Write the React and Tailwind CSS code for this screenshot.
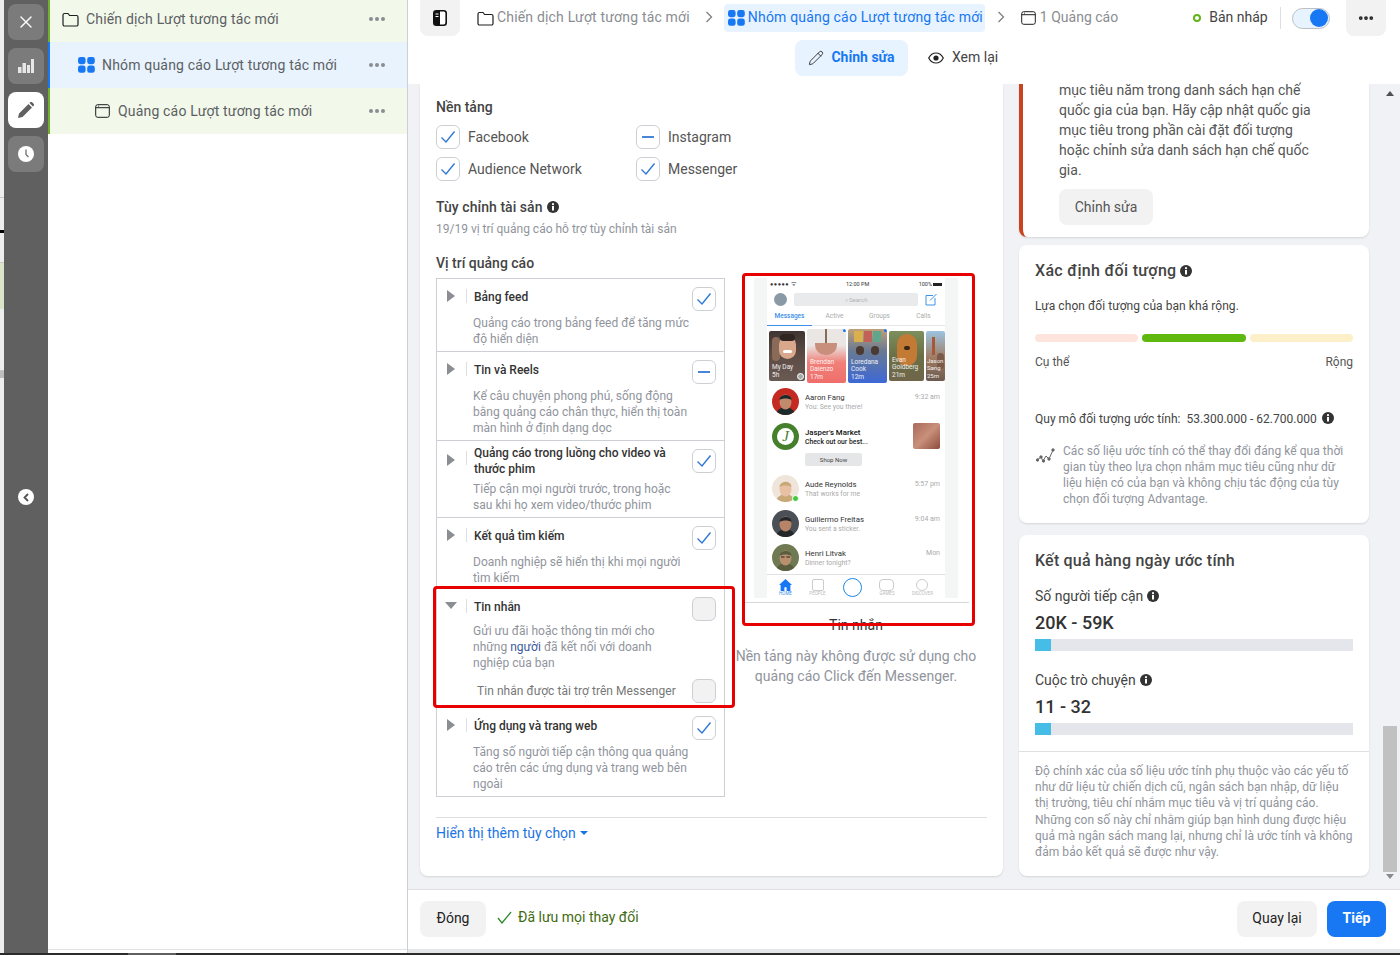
import React from "react";
import { X, Pencil, MoreHorizontal } from "lucide-react";

const Info = ({ s = 12, c = "#333" }) => (
  <svg width={s} height={s} viewBox="0 0 12 12" className="inline-block shrink-0">
    <circle cx="6" cy="6" r="6" fill={c} />
    <rect x="5" y="5" width="2" height="4.5" fill="#fff" />
    <circle cx="6" cy="3.2" r="1.1" fill="#fff" />
  </svg>
);
const Folder = ({ c = "#1c1e21" }) => (
  <svg width="17" height="15" viewBox="0 0 17 15" fill="none" stroke={c} strokeWidth="1.2" className="shrink-0">
    <path d="M1 3a1.5 1.5 0 0 1 1.5-1.5H6l1.6 2H14.5A1.5 1.500 0 0 1 16 5v7.500a1.500 1.500 0 0 1-1.500 1.500h-12A1.500 1.500 0 0 1 1 12.500z" />
  </svg>
);
const Grid4 = () => (
  <svg width="17" height="16" viewBox="0 0 17 16" fill="#1877f2" className="shrink-0">
    <rect x="0" y="0" width="7.6" height="7.2" rx="2.4" />
    <rect x="9.2" y="0" width="7.6" height="7.2" rx="2.4" />
    <rect x="0" y="8.6" width="7.6" height="7.2" rx="2.4" />
    <rect x="9.2" y="8.6" width="7.6" height="7.2" rx="2.4" />
  </svg>
);
const AdIcon = () => (
  <svg width="15" height="14" viewBox="0 0 15 14" fill="none" stroke="#1c1e21" strokeWidth="1" className="shrink-0">
    <rect x="0.7" y="0.7" width="13.6" height="12.6" rx="2" />
    <path d="M0.7 3.7h13.6" />
    <path d="M3 2.2h.8" />
  </svg>
);
const Box = ({ kind = "check", gray }) => (
  <div className={`w-6 h-6 rounded-md border border-[#ccd0d5] flex items-center justify-center shrink-0 ${gray ? "bg-[#f2f2f2]" : "bg-white"}`}>
    {kind === "check" && (
      <svg width="16" height="14" viewBox="0 0 16 14" fill="none" stroke="#2f78d8" strokeWidth="1.4">
        <path d="M1.5 7.5 6 12 14.5 1.5" />
      </svg>
    )}
    {kind === "dash" && <div className="w-3 h-[2px] bg-[#4a86d8]" />}
  </div>
);
const Dots = () => (
  <div className="flex gap-[2px] ml-auto mr-[22px]">
    <span className="w-[4px] h-[4px] rounded-full bg-[#8a8d91]" />
    <span className="w-[4px] h-[4px] rounded-full bg-[#8a8d91]" />
    <span className="w-[4px] h-[4px] rounded-full bg-[#8a8d91]" />
  </div>
);
const Chevron = () => (
  <svg width="8" height="12" viewBox="0 0 8 12" fill="none" stroke="#7c7f84" strokeWidth="1.3" className="shrink-0 -mt-[2px]">
    <path d="M1.5 1 6.5 6 1.5 11" />
  </svg>
);

const Row = ({ h, title, desc, kind = "check", open, last, tp = "pt-[10px]", dg = "mt-[10px]", tri = "pt-[11px]" }) => (
  <div className={`flex pl-[10px] pr-[8px] ${last ? "" : "border-b border-[#ccd0d5]"} ${h}`}>
    <div className={`w-[19px] shrink-0 flex ${tri}`}>
      {open ? (
        <svg width="12" height="7" viewBox="0 0 12 7" fill="#8a8d91" className="mt-[2px] -ml-[2px]"><path d="M0 0h12L6 7z" /></svg>
      ) : (
        <svg width="8" height="12" viewBox="0 0 8 12" fill="#8a8d91"><path d="M0 0l8 6-8 6z" /></svg>
      )}
    </div>
    <div className="w-[1px] h-[14px] bg-[#dddfe2] mt-[10px] shrink-0" />
    <div className="ml-[7px] w-[219px] shrink-0">
      <div className={`text-[12px] leading-[16px] font-medium text-[#333] w-[205px] ${tp}`}>{title}</div>
      <div className={`text-[12px] leading-[16px] text-[#90949c] tracking-[0.03px] -ml-[1px] w-[225px] ${dg}`}>{desc}</div>
    </div>
    <div className="pt-[8px] ml-[-1px]"><Box kind={kind} gray={kind === "none"} /></div>
  </div>
);

const Tile = ({ w, h, bg, lines, children, big, tight }) => (
  <div className="relative shrink-0 rounded-[2px] overflow-hidden" style={{ width: w, height: h, background: bg }}>
    {children}
    <div className={`absolute bottom-[2px] text-white/90 leading-[7.5px] ${tight ? "left-[1px] text-[6px]" : "left-[3px] text-[6.5px]"}`}>
      {lines.map((l) => <div key={l}>{l}</div>)}
    </div>
    {big && <span className="absolute top-0 right-0 w-[3px] h-[3px] rounded-full bg-[#1877f2]" />}
  </div>
);

const Face = ({ id, skin, hair, bg, dot, glasses }) => (
  <div className="relative w-[27px] h-[27px] shrink-0">
    <svg viewBox="0 0 27 27" width="27" height="27">
      <clipPath id={id}><circle cx="13.5" cy="13.5" r="13.5" /></clipPath>
      <g clipPath={`url(#${id})`}>
        <rect width="27" height="27" fill={bg} />
        <ellipse cx="13.5" cy="28" rx="10" ry="9" fill={hair} />
        <ellipse cx="13.5" cy="14" rx="6" ry="7.5" fill={skin} />
        <path d="M7.5 12c0-6 12-7 12 0-3-2-9-2-12 0z" fill={hair} />
        {glasses && <path d="M9 13h3.500M14.500 13H18" stroke="#222" strokeWidth="1.200" />}
      </g>
    </svg>
    {dot && <span className="absolute right-0 bottom-0 w-[7px] h-[7px] rounded-full bg-[#42c83f] border border-white" />}
  </div>
);

const Msg = ({ name, sub, time, img, mt, bold }) => (
  <div className={`flex items-start pl-[5px] pr-[5px] ${mt}`}>
    {img}
    <div className="ml-[6px] pt-[5px] grow min-w-0 whitespace-nowrap">
      <div className={`text-[7.8px] leading-[9px] ${bold ? "text-[#111] font-medium" : "text-[#333]"}`}>{name}</div>
      <div className={`text-[6.8px] leading-[11px] ${bold ? "text-[#222] font-medium" : "text-[#aaa]"}`}>{sub}</div>
    </div>
    {time && <div className="text-[7px] leading-[9px] pt-[5px] text-[#aaa]">{time}</div>}
  </div>
);

function Phone() {
  return (
    <div className="w-[225px] border-b border-[#d6d7d9] pb-[4px] mx-auto">
      <div className="w-[204px] h-[320px] mx-auto bg-[#f4f5f5] px-[13px]">
        <div className="w-[178px] h-[320px] bg-white overflow-hidden flex flex-col">
          <div className="flex justify-between items-center h-[10px] mt-[1px] px-[3px] text-[5.5px] text-[#333]">
            <span className="tracking-[0.5px]">●●●●● ᯤ</span>
            <span>12:00 PM</span>
            <span className="flex items-center gap-[1px]">100% <span className="w-[9px] h-[3px] bg-[#222] inline-block" /></span>
          </div>
          <div className="flex items-center h-[14px] mt-[3px] px-[7px] gap-[7px]">
            <div className="w-[13px] h-[13px] rounded-full bg-[#8a9aa5] shrink-0" />
            <div className="grow h-[13px] rounded-[2px] bg-[#e9eaeb] text-[6px] text-[#b4b6b8] flex items-center justify-center">⌕ Search</div>
            <svg width="13" height="13" viewBox="0 0 13 13" fill="none" stroke="#3a95e8" strokeWidth="1" className="shrink-0">
              <path d="M1 2.500h7M1 2.500v9.500h9V5M5 7.500 11.500 1" />
            </svg>
          </div>
          <div className="flex h-[18px] border-b border-[#e5e6e7] mt-[2px] text-[6.5px] text-[#aaa] items-center relative">
            <span className="w-[45px] text-center text-[#3b8fe6] font-medium h-[18px] leading-[17px] border-b border-[#3b8fe6]">Messages</span>
            <span className="w-[45px] text-center">Active</span>
            <span className="w-[45px] text-center">Groups</span>
            <span className="w-[43px] text-center">Calls</span>
          </div>
          <div className="flex gap-[2px] pl-[2px] items-center h-[58px] mt-[1px]">
            <Tile w={36} h={50} bg="linear-gradient(180deg,#3f3532,#5c4a42 45%,#6a5a55)" lines={["My Day", "5h"]}>
              <div className="absolute left-[3px] top-[6px] w-[8px] h-[24px] rounded-full bg-[#8a6a58]" />
              <div className="absolute left-[10px] top-[5px] w-[17px] h-[23px] rounded-full bg-[#d8a78c]" />
              <div className="absolute left-[11px] top-[3px] w-[15px] h-[7px] rounded-full bg-[#2f2521]" />
              <div className="absolute left-[14px] top-[19px] w-[9px] h-[3px] rounded-full bg-white" />
              <div className="absolute right-[1px] bottom-[1px] w-[7px] h-[7px] rounded-full bg-[#aaa] border border-white" />
            </Tile>
            <Tile w={39} h={54} bg="linear-gradient(180deg,#e9e6e4,#e9e6e4 30%,#f08078 62%,#ef6e6c)" lines={["Brendan", "Daienzo", "17m"]} big>
              <div className="absolute left-[8px] top-[14px] w-[22px] h-[12px] rounded-b-[10px] bg-[#c98f7d]" />
              <div className="absolute left-[18px] top-0 w-[2px] h-[14px] bg-[#8a6a5a]" />
            </Tile>
            <Tile w={39} h={54} bg="linear-gradient(180deg,#c0a078,#6a7a92 40%,#3d68d6)" lines={["Loredana", "Cook", "12m"]} big>
              <div className="absolute left-[6px] top-[2px] w-[9px] h-[11px] bg-[#d9b04c]" />
              <div className="absolute left-[16px] top-[2px] w-[8px] h-[11px] bg-[#c0625a]" />
              <div className="absolute left-[25px] top-[2px] w-[8px] h-[11px] bg-[#5fa68c]" />
              <div className="absolute left-[8px] top-[17px] w-[8px] h-[9px] rounded-full bg-[#4a3a32]" />
              <div className="absolute left-[23px] top-[17px] w-[8px] h-[9px] rounded-full bg-[#4a3a32]" />
            </Tile>
            <Tile w={35} h={50} bg="linear-gradient(180deg,#7d8f5c,#6a6f45 50%,#70654a)" lines={["Evan", "Goldberg", "21m"]}>
              <div className="absolute left-[8px] top-[3px] w-[20px] h-[32px] rounded-full bg-[#c27a35]" />
              <div className="absolute left-[15px] top-[15px] w-[6px] h-[4px] rounded-full bg-[#3a2415]" />
            </Tile>
            <Tile tight w={19} h={50} bg="linear-gradient(180deg,#9cc4e0,#a07a60 55%,#6b5a50)" lines={["Jason", "Sang", "25m"]}>
              <div className="absolute left-[6px] top-[6px] w-[3px] h-[18px] bg-[#a8583a]" />
              <div className="absolute left-[11px] top-[22px] w-[7px] h-[16px] rounded-full bg-[#7a5a48]" />
            </Tile>
          </div>
          <div className="flex flex-col">
            <Msg mt="mt-[3px]" name="Aaron Fang" sub="You: See you there!" time="9:32 am" img={<Face id="fa" skin="#c08a6c" hair="#1c2a2a" bg="#c52a22" />} />
            <Msg mt="mt-[8px]" name="Jasper's Market" sub="Check out our best..." bold img={
              <div className="w-[27px] h-[27px] rounded-full bg-[#46802c] flex items-center justify-center shrink-0">
                <div className="w-[17px] h-[17px] rounded-full bg-white flex items-center justify-center text-[#46802c] text-[15px] italic font-['Liberation_Serif',serif]">J</div>
              </div>
            } time={<div className="w-[27px] h-[26px] -mt-[5px] rounded-[2px] bg-[linear-gradient(135deg,#a9695a,#c8907a_50%,#8c4a3c)]" />} />
            <div className="ml-[38px] mt-[3px] w-[57px] h-[13px] bg-[#e5e6e7] rounded-[2px] text-[6px] leading-[13px] text-center text-[#444]">Shop Now</div>
            <Msg mt="mt-[9px]" name="Aude Reynolds" sub="That works for me" time="5:57 pm" img={<Face id="fb" skin="#e8c0a4" hair="#c9a878" bg="#efe5da" dot />} />
            <Msg mt="mt-[8px]" name="Guillermo Freitas" sub="You sent a sticker." time="9:04 am" img={<Face id="fc" skin="#b88468" hair="#24282b" bg="#4a5056" />} />
            <Msg mt="mt-[7px]" name="Henri Litvak" sub="Dinner tonight?" time="Mon" img={<Face id="fd" skin="#b8906e" hair="#5a5d3e" bg="#6f7a52" glasses />} />
          </div>
          <div className="mt-[3px] border-t border-[#dfe0e1] flex justify-between items-start pl-[12px] pr-[12px] h-[24px] relative text-[4.5px] text-[#bbb]">
            <div className="flex flex-col items-center text-[#3b8fe6] pt-[4px]">
              <svg width="13" height="12" viewBox="0 0 12 11" fill="#1877f2"><path d="M6 0 12 5.500H10.500V11H7V7.500H5V11H1.500V5.500H0z" /></svg>
              <span>HOME</span>
            </div>
            <div className="flex flex-col items-center pt-[4px]">
              <div className="w-[12px] h-[12px] rounded-[2px] border border-[#ccc]" />
              <span>PEOPLE</span>
            </div>
            <div className="w-[19px] h-[19px] rounded-full border-[1.5px] border-[#1d87e4] mt-[3px]" />
            <div className="flex flex-col items-center pt-[4px]">
              <div className="w-[15px] h-[12px] rounded-[4px] border border-[#ccc]" />
              <span>GAMES</span>
            </div>
            <div className="flex flex-col items-center pt-[4px]">
              <div className="w-[12px] h-[12px] rounded-full border border-[#ccc]" />
              <span>DISCOVER</span>
            </div>
          </div>
        </div>
      </div>
    </div>
  );
}

export default function App() {
  return (
    <div className="flex flex-col w-[1400px] h-[955px] overflow-hidden bg-white font-['Roboto',sans-serif] text-[14px] text-[#444]">
      <div className="flex h-[953px] shrink-0 overflow-hidden">
        {/* underlying page sliver */}
        <div className="w-[4px] shrink-0 flex flex-col bg-[#eceeee]">
          <div className="h-[198px] border-b border-[#c8c8c8]" />
          <div className="h-[32px]" />
          <div className="h-[3px] bg-black" />
          <div className="h-[30px] border-b border-[#c8c8c8]" />
          <div className="h-[46px] bg-[#dbe4c8]" />
          <div className="h-[62px] border-b border-[#c8c8c8]" />
          <div className="h-[7px] bg-[#bdbdbd]" />
        </div>
        {/* rail */}
        <div className="w-[44px] shrink-0 bg-[#606060] flex flex-col items-center pt-1 gap-2">
          <div className="w-9 h-9 rounded-lg bg-[#7b7b7b] flex items-center justify-center"><X size={20} color="#fff" strokeWidth={1.6} /></div>
          <div className="w-9 h-9 rounded-lg bg-[#7b7b7b] flex items-center justify-center">
            <svg width="16" height="14" viewBox="0 0 16 14" fill="#e6e6e6"><rect x="0" y="8" width="3.500" height="6" /><rect x="4.500" y="4" width="3.500" height="10" /><rect x="9" y="6" width="3" height="8" /><rect x="13" y="0" width="3" height="14" /></svg>
          </div>
          <div className="w-9 h-9 rounded-lg bg-white flex items-center justify-center">
            <svg width="16" height="16" viewBox="0 0 16 16" fill="#606060"><path d="M0 16l1-4.500L10.500 2l3.500 3.500L4.500 15zM11.500 1l1-1a1 1 0 0 1 1.400 0l2 2a1 1 0 0 1 0 1.400l-1 1z" /></svg>
          </div>
          <div className="w-9 h-9 rounded-lg bg-[#7b7b7b] flex items-center justify-center">
            <svg width="16" height="16" viewBox="0 0 16 16"><circle cx="8" cy="8" r="8" fill="#fff" /><path d="M8 3.500V8.500L10.500 11" stroke="#707070" strokeWidth="1.300" fill="none" /></svg>
          </div>
          <div className="mt-[309px] w-4 h-4 rounded-full bg-white flex items-center justify-center">
            <svg width="6" height="9" viewBox="0 0 6 9" fill="none" stroke="#555" strokeWidth="1.800"><path d="M5 1 1.500 4.500 5 8" /></svg>
          </div>
        </div>
        {/* tree */}
        <div className="w-[360px] shrink-0 border-r border-[#ccd0d5] text-[14px] text-[#5c5f63] tracking-[0.18px] flex flex-col">
          <div className="h-[42px] bg-[#f2f8ea] border-l-2 border-[#6fb02c] flex items-center pl-[12px] pb-[4px]">
            <Folder /><span className="ml-[7px]">Chiến dịch Lượt tương tác mới</span><Dots />
          </div>
          <div className="h-[46px] bg-[#e8f3fd] border-l-2 border-[#1877f2] flex items-center pl-[28px]">
            <Grid4 /><span className="ml-[7px]">Nhóm quảng cáo Lượt tương tác mới</span><Dots />
          </div>
          <div className="h-[46px] bg-[#f2f8ea] border-l-2 border-[#6fb02c] flex items-center pl-[45px]">
            <AdIcon /><span className="ml-[8px]">Quảng cáo Lượt tương tác mới</span><Dots />
          </div>
          <div className="mt-auto h-[4px] border-t border-[#e0e1e2]" />
        </div>
        {/* main */}
        <div className="w-[992px] shrink-0 flex flex-col">
          <div className="h-[84px] shrink-0 bg-white pl-[12px] pr-[14px]">
            <div className="flex items-center h-[36px] text-[14px] text-[#8a8d91] whitespace-nowrap">
              <div className="w-10 h-9 rounded-b-lg bg-[#f2f2f2] flex items-center justify-center shrink-0">
                <svg width="14" height="16" viewBox="0 0 14 16"><rect x="0.800" y="0.800" width="12.400" height="14.400" rx="2.500" fill="#fff" stroke="#111" strokeWidth="1.600" /><path d="M3 1h4v14H3a2 2 0 0 1-2-2V3a2 2 0 0 1 2-2z" fill="#111" /><path d="M2.500 4h3M2.500 6.500h3" stroke="#fff" /></svg>
              </div>
              <span className="ml-[17px] shrink-0"><Folder /></span>
              <span className="ml-[3px] -mt-[2px] tracking-[0.18px] shrink-0">Chiến dịch Lượt tương tác mới</span>
              <span className="ml-[15px] shrink-0"><Chevron /></span>
              <div className="ml-[11px] h-[28px] w-[261px] bg-[#e7f3ff] rounded flex items-center pl-[4px] text-[#1877f2] shrink-0">
                <Grid4 /><span className="ml-[3px] -mt-[2px] tracking-[0.18px]">Nhóm quảng cáo Lượt tương tác mới</span>
              </div>
              <span className="ml-[12px] shrink-0"><Chevron /></span>
              <span className="ml-[16px] shrink-0"><AdIcon /></span>
              <span className="ml-[4px] -mt-[2px] shrink-0">1 Quảng cáo</span>
              <span className="ml-[75px] w-2 h-2 rounded-full border-[2px] border-[#63b31d] shrink-0" />
              <span className="ml-[8px] -mt-[2px] text-[#444] shrink-0">Bản nháp</span>
              <span className="ml-[12px] w-[1px] h-[22px] bg-[#dddfe2] shrink-0" />
              <div className="ml-[11px] w-[38px] h-[21px] rounded-full bg-[#e7f3ff] border border-[#bcc0c4] flex items-center justify-end pr-[1px] shrink-0">
                <span className="w-[18px] h-[18px] rounded-full bg-[#1877f2]" />
              </div>
              <div className="ml-[16px] w-10 h-9 rounded-b-lg bg-[#f2f2f2] flex items-center justify-center shrink-0">
                <MoreHorizontal size={18} color="#222" strokeWidth={3} />
              </div>
            </div>
            <div className="flex items-center mt-[4px] ml-[375px]">
              <div className="w-[113px] h-9 rounded-lg bg-[#e7f3ff] flex items-center justify-center gap-[7px] text-[#1877f2] font-bold">
                <Pencil size={16} color="#222" strokeWidth={1.300} /><span className="-mt-[2px]">Chỉnh sửa</span>
              </div>
              <div className="ml-[20px] flex items-center gap-[8px] text-[#444]">
                <svg width="16" height="12" viewBox="0 0 16 12" fill="none"><path d="M.7 6C2.500 2.500 5 1 8 1s5.500 1.500 7.300 5C13.500 9.500 11 11 8 11S2.500 9.500.7 6z" stroke="#222" strokeWidth="1.200" /><circle cx="8" cy="6" r="2.600" fill="#222" /></svg>
                <span className="-mt-[2px]">Xem lại</span>
              </div>
            </div>
          </div>
          <div className="h-[805px] shrink-0 bg-[#f0f2f5] flex">
            {/* center card */}
            <div className="relative ml-[12px] w-[583px] h-[792px] shrink-0 bg-white rounded-b-lg shadow-[0_1px_2px_rgba(0,0,0,0.12)] pl-[16px] pr-[16px] pt-[14px]">
              <div className="font-medium text-[#444] leading-[18px]">Nền tảng</div>
              <div className="grid grid-cols-[200px_1fr] gap-y-2 mt-[9px]">
                {[["Facebook", "check"], ["Instagram", "dash"], ["Audience Network", "check"], ["Messenger", "check"]].map(([t, k]) => (
                  <div key={t} className="flex items-center gap-2 h-6"><Box kind={k} /><span className="text-[#555]">{t}</span></div>
                ))}
              </div>
              <div className="flex items-center gap-1 font-medium text-[#444] mt-[17px] leading-[18px] tracking-[0.05px]">Tùy chỉnh tài sản <Info /></div>
              <div className="text-[12px] leading-[16px] text-[#90949c] mt-[5px]">19/19 vị trí quảng cáo hỗ trợ tùy chỉnh tài sản</div>
              <div className="font-medium text-[#444] mt-[17px] leading-[18px]">Vị trí quảng cáo</div>
              <div className="flex mt-[6px]">
                <div className="w-[289px] h-[519px] shrink-0 border border-[#ccd0d5]">
                  <Row h="h-[73px]" title="Bảng feed" desc="Quảng cáo trong bảng feed để tăng mức độ hiển diện" />
                  <Row h="h-[89px]" title="Tin và Reels" desc={<>Kể câu chuyện phong phú, sống động<br />bằng quảng cáo chân thực, hiển thị toàn<br />màn hình ở định dạng dọc</>} kind="dash" />
                  <Row h="h-[77px]" tp="pt-[4px]" dg="mt-[4px]" tri="pt-[13px]" title="Quảng cáo trong luồng cho video và thước phim" desc={<>Tiếp cận mọi người trước, trong hoặc<br />sau khi họ xem video/thước phim</>} />
                  <Row h="h-[71px]" title="Kết quả tìm kiếm" desc={<>Doanh nghiệp sẽ hiển thị khi mọi người<br />tìm kiếm</>} />
                  <div className="h-[119px] border-b border-[#ccd0d5]">
                    <Row last h="h-[88px]" open kind="none" dg="mt-[8px]" title="Tin nhắn" desc={<>Gửi ưu đãi hoặc thông tin mới cho<br />những <span className="text-[#3a5a9c]">người</span> đã kết nối với doanh<br />nghiệp của bạn</>} />
                    <div className="flex items-center pl-[40px] pr-[8px] mt-[2px]">
                      <span className="text-[12px] text-[#777] tracking-[0.05px]">Tin nhắn được tài trợ trên Messenger</span>
                      <span className="ml-auto"><Box kind="none" gray /></span>
                    </div>
                  </div>
                  <Row last h="h-[88px]" title="Ứng dụng và trang web" desc={<>Tăng số người tiếp cận thông qua quảng<br />cáo trên các ứng dụng và trang web bên<br />ngoài</>} />
                </div>
                <div className="w-[262px] shrink-0 flex flex-col items-center">
                  <Phone />
                  <div className="h-[18px] mt-[13px] text-[#333] leading-[18px]">Tin nhắn</div>
                  <div className="mt-[12px] w-[250px] text-center text-[#90949c] leading-[20px] tracking-[0.02px]">Nền tảng này không được sử dụng cho quảng cáo Click đến Messenger.</div>
                </div>
              </div>
              <div className="h-[1px] bg-[#dddfe2] mt-[20px]" />
              <div className="mt-[6px] text-[#1b74e4] leading-[18px] flex items-center gap-1">Hiển thị thêm tùy chọn
                <svg width="8" height="4" viewBox="0 0 8 4" fill="#1b74e4"><path d="M0 0h8L4 4z" /></svg>
              </div>
              {/* annotations */}
              <div className="absolute left-[13px] top-[502px] w-[302px] h-[122px] border-[3px] border-[#e60000] rounded-[4px] pointer-events-none" />
              <div className="absolute left-[322px] top-[189px] w-[233px] h-[353px] border-[3px] border-[#e60000] rounded-[4px] pointer-events-none" />
            </div>
            {/* right column */}
            <div className="ml-[16px] w-[350px] shrink-0 flex flex-col">
              <div className="h-[153px] bg-white rounded-b-lg border-l-[4px] border-[#c9431f] shadow-[0_1px_2px_rgba(0,0,0,0.12)] shrink-0 pl-[36px]">
                <div className="leading-[12px] mb-[4px] text-[#555]">mục tiêu năm trong danh sách hạn chế</div>
                <div className="leading-[20px] text-[#555] w-[270px]">
                  quốc gia của bạn. Hãy cập nhật quốc gia<br />mục tiêu trong phần cài đặt đối tượng<br />hoặc chỉnh sửa danh sách hạn chế quốc<br />gia.
                </div>
                <div className="mt-[9px] w-[94px] h-9 rounded-lg bg-[#f2f2f2] flex items-center justify-center text-[#555]">Chỉnh sửa</div>
              </div>
              <div className="mt-[8px] h-[278px] bg-white rounded-lg shadow-[0_1px_2px_rgba(0,0,0,0.12)] shrink-0 px-4 pt-[16px]">
                <div className="flex items-center gap-1 text-[16px] leading-[20px] font-medium text-[#444] tracking-[0.3px]">Xác định đối tượng <Info /></div>
                <div className="text-[12px] leading-[16px] text-[#444] mt-[17px] tracking-[0.06px]">Lựa chọn đối tượng của bạn khá rộng.</div>
                <div className="grid grid-cols-3 gap-1 mt-[20px]">
                  <div className="h-2 rounded-full bg-[#fde4dc]" />
                  <div className="h-2 rounded-full bg-[#5fb80e]" />
                  <div className="h-2 rounded-full bg-[#fdf0c8]" />
                </div>
                <div className="flex justify-between text-[12px] leading-[16px] text-[#555] mt-[12px]"><span>Cụ thể</span><span>Rộng</span></div>
                <div className="flex items-center text-[12px] leading-[16px] text-[#444] mt-[41px]">
                  <span className="tracking-[0.02px]">Quy mô đối tượng ước tính:&nbsp; 53.300.000 - 62.700.000</span><span className="ml-[5px] -mt-[4px]"><Info /></span>
                </div>
                <div className="flex mt-[16px]">
                  <svg width="20" height="18" viewBox="0 0 20 18" fill="none" className="shrink-0 mt-[4px] ml-[1px]" stroke="#666" strokeWidth="1"><path d="M1 13l4-3 2 4 3-5 3 3 4-9" /><circle cx="1.500" cy="13" r="1.200" fill="#666" /><circle cx="5" cy="10" r="1.200" fill="#666" /><circle cx="7.500" cy="14" r="1.200" fill="#666" /><circle cx="13" cy="12" r="1.200" fill="#666" /><circle cx="17" cy="3" r="1.200" fill="#666" /></svg>
                  <div className="ml-[7px] text-[12px] leading-[16px] text-[#90949c] tracking-[0.04px]">Các số liệu ước tính có thể thay đổi đáng kể qua thời<br />gian tùy theo lựa chọn nhắm mục tiêu cũng như dữ<br />liệu hiện có của bạn và không chịu tác động của tùy<br />chọn đối tượng Advantage.</div>
                </div>
              </div>
              <div className="mt-[12px] h-[341px] bg-white rounded-lg shadow-[0_1px_2px_rgba(0,0,0,0.12)] shrink-0">
                <div className="px-4 pt-[16px] h-[217px] border-b border-[#dddfe2]">
                  <div className="text-[16px] leading-[20px] font-medium text-[#444] tracking-[0.2px]">Kết quả hàng ngày ước tính</div>
                  <div className="flex items-center gap-1 text-[14px] leading-[18px] text-[#444] mt-[16px]">Số người tiếp cận <Info /></div>
                  <div className="text-[18px] leading-[22px] font-medium text-[#333] mt-[7px]">20K - 59K</div>
                  <div className="h-3 bg-[#e4e6eb] mt-[5px]"><div className="w-4 h-3 bg-[#45bde6]" /></div>
                  <div className="flex items-center gap-1 text-[14px] leading-[18px] text-[#444] mt-[20px]">Cuộc trò chuyện <Info /></div>
                  <div className="text-[18px] leading-[22px] font-medium text-[#333] mt-[7px]">11 - 32</div>
                  <div className="h-3 bg-[#e4e6eb] mt-[5px]"><div className="w-4 h-3 bg-[#45bde6]" /></div>
                </div>
                <div className="px-4 pt-[11px] text-[12px] leading-[16.200px] text-[#90949c] tracking-[0.04px]">Độ chính xác của số liệu ước tính phụ thuộc vào các yếu tố<br />như dữ liệu từ chiến dịch cũ, ngân sách bạn nhập, dữ liệu<br />thị trường, tiêu chí nhắm mục tiêu và vị trí quảng cáo.<br />Những con số này chỉ nhằm giúp bạn hình dung được hiệu<br />quả mà ngân sách mang lại, nhưng chỉ là ước tính và không<br />đảm bảo kết quả sẽ được như vậy.</div>
              </div>
            </div>
            {/* scrollbar */}
            <div className="ml-[14px] w-[14px] shrink-0 flex flex-col items-center">
              <svg width="8" height="5" viewBox="0 0 8 5" className="mt-[7px]" fill="#505050"><path d="M0 5h8L4 0z" /></svg>
              <div className="mt-[630px] w-[14px] h-[146px] bg-[#c1c1c1]" />
              <svg width="8" height="5" viewBox="0 0 8 5" className="mt-[2px]" fill="#8a8a8a"><path d="M0 0h8L4 5z" /></svg>
            </div>
          </div>
          <div className="h-[60px] shrink-0 bg-white border-t border-[#dddfe2] flex items-start pt-[11px] px-[12px] pr-[14px]">
            <div className="w-[66px] h-9 rounded-lg bg-[#f2f2f2] flex items-center justify-center text-[#222]"><span className="-mt-[2px]">Đóng</span></div>
            <svg width="15" height="13" viewBox="0 0 15 13" fill="none" stroke="#2d8a2d" strokeWidth="1.300" className="ml-[11px] mt-[10px]"><path d="M1 7l4 5 9-11" /></svg>
            <span className="ml-[6px] mt-[6px] leading-[20px] text-[#3f6b0f]">Đã lưu mọi thay đổi</span>
            <div className="ml-auto w-[80px] h-9 rounded-lg bg-[#f2f2f2] flex items-center justify-center text-[#222]"><span className="-mt-[2px]">Quay lại</span></div>
            <div className="ml-[10px] w-[59px] h-9 rounded-lg bg-[#1877f2] flex items-center justify-center text-white font-bold"><span className="-mt-[2px]">Tiếp</span></div>
          </div>
          <div className="h-[4px] bg-[#e4e6e8]" />
        </div>
      </div>
      <div className="h-[2px] shrink-0 bg-[#2b2b2b] flex">
        <div className="ml-[128px] w-[48px] bg-[#606060]" />
      </div>
    </div>
  );
}
